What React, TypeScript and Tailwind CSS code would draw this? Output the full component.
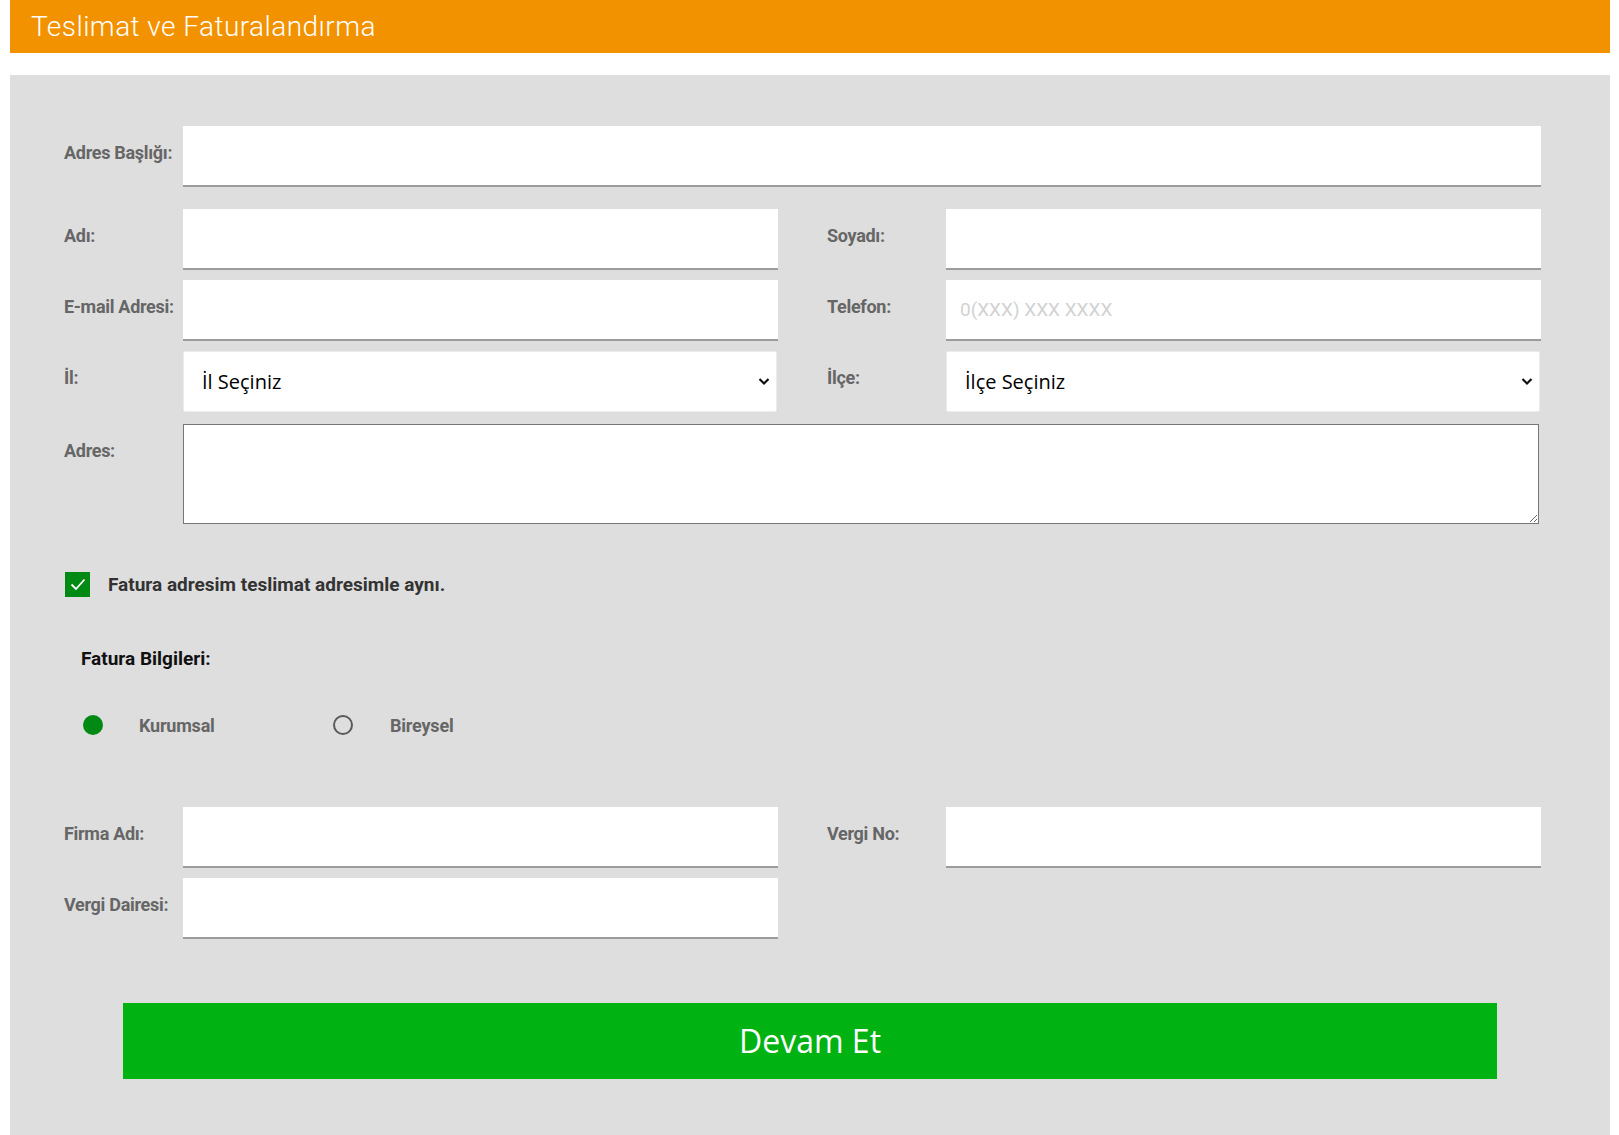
import React from "react";

const labelCls =
  "w-[119px] shrink-0 pt-[16px] leading-[22px] text-[18px] font-bold text-[#666] tracking-[-0.3px]";
const inputCls =
  "h-[61px] flex-1 bg-white border-0 border-b-2 border-[#9c9c9c] px-[14px] text-[19px] text-[#333] outline-none placeholder:text-[#d2d2d2]";

function Field({ label, placeholder }: { label: string; placeholder?: string }) {
  return (
    <div className="flex w-[714px] items-start">
      <span className={labelCls}>{label}</span>
      <input className={inputCls} placeholder={placeholder} />
    </div>
  );
}

function SelectField({ label, text }: { label: string; text: string }) {
  return (
    <div className="flex w-[714px] items-start">
      <span className={labelCls}>{label}</span>
      <div className="relative flex-1">
        <select
          className="h-[61px] w-[594px] appearance-none rounded-[2px] border border-[#ececec] bg-white pl-[18px] text-[20px] text-black outline-none"
          style={{ fontFamily: '"Open Sans", "Noto Sans", sans-serif' }}
          defaultValue=""
        >
          <option value="">{text}</option>
        </select>
        <svg
          className="pointer-events-none absolute right-[8px] top-[26px]"
          width="12"
          height="9"
          viewBox="0 0 12 9"
        >
          <path d="M1.5 2 L6 6.5 L10.5 2" fill="none" stroke="#111" strokeWidth="2.2" />
        </svg>
      </div>
    </div>
  );
}

export default function App() {
  return (
    <div className="min-h-screen bg-white" style={{ fontFamily: 'Roboto, "Liberation Sans", sans-serif' }}>
      <div className="ml-[10px] w-[1600px]">
        <div className="flex h-[53px] items-center bg-[#f39200] pl-[21px]">
          <h1 className="text-[28px] font-light tracking-[0.45px] text-white">Teslimat ve Faturalandırma</h1>
        </div>

        <div className="mt-[22px] bg-[#dedede] pb-[70px] pl-[54px] pr-[69px] pt-[51px]">
          <div className="flex items-start">
            <span className={labelCls}>Adres Başlığı:</span>
            <input className={inputCls} />
          </div>

          <div className="mt-[22px] flex gap-[49px]">
            <Field label="Adı:" />
            <Field label="Soyadı:" />
          </div>
          <div className="mt-[10px] flex gap-[49px]">
            <Field label="E-mail Adresi:" />
            <Field label="Telefon:" placeholder="0(XXX) XXX XXXX" />
          </div>
          <div className="mt-[10px] flex gap-[49px]">
            <SelectField label="İl:" text="İl Seçiniz" />
            <SelectField label="İlçe:" text="İlçe Seçiniz" />
          </div>

          <div className="mt-[12px] flex items-start">
            <span className={labelCls}>Adres:</span>
            <textarea className="mr-[2px] h-[100px] flex-1 border border-[#767676] bg-white p-2 text-[16px] outline-none" />
          </div>

          <label className="mt-[48px] flex items-center">
            <span className="ml-[1px] flex h-[25px] w-[25px] items-center justify-center bg-[#008a14]">
              <svg width="16" height="13" viewBox="0 0 16 13">
                <path d="M1.5 6.5 L6 11 L14.5 1.5" fill="none" stroke="#fff" strokeWidth="1.8" />
              </svg>
            </span>
            <span className="ml-[18px] text-[19px] font-bold leading-[22px] text-[#333]">
              Fatura adresim teslimat adresimle aynı.
            </span>
          </label>

          <div className="ml-[17px] mt-[51px] text-[19px] font-bold leading-[22px] text-[#111]">
            Fatura Bilgileri:
          </div>

          <div className="ml-[19px] mt-[45px] flex h-[20px] items-center">
            <span className="h-[20px] w-[20px] rounded-full bg-[#008a14]" />
            <span className="ml-[36px] w-[194px] text-[18px] font-bold tracking-[-0.2px] text-[#666]">Kurumsal</span>
            <span className="h-[20px] w-[20px] rounded-full border-2 border-[#5a5a5a]" />
            <span className="ml-[37px] text-[18px] font-bold tracking-[-0.2px] text-[#666]">Bireysel</span>
          </div>

          <div className="mt-[72px] flex gap-[49px]">
            <Field label="Firma Adı:" />
            <Field label="Vergi No:" />
          </div>
          <div className="mt-[10px] flex gap-[49px]">
            <Field label="Vergi Dairesi:" />
          </div>

          <button
            className="ml-[59px] mt-[64px] flex h-[76px] w-[1374px] items-center justify-center bg-[#00b212] text-[32px] text-white"
            style={{ fontFamily: '"Open Sans", "Noto Sans", sans-serif' }}
          >
            Devam Et
          </button>
        </div>
      </div>
    </div>
  );
}
